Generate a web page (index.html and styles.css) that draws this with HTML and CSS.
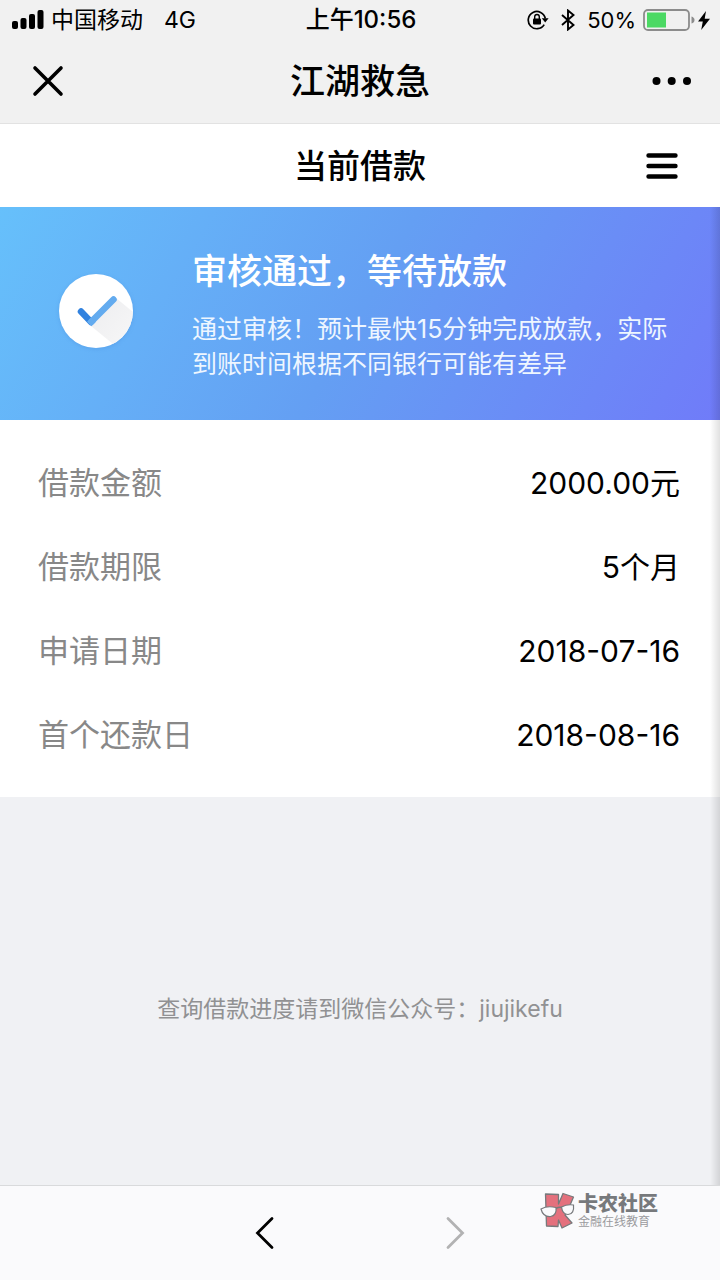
FILE: index.html
```html
<!DOCTYPE html>
<html lang="zh-CN">
<head>
<meta charset="utf-8">
<meta name="viewport" content="width=device-width, initial-scale=1">
<title>江湖救急</title>
<link rel="stylesheet" href="styles.css">
</head>
<body>
<div class="screen">
  <header class="app-header">
    <div class="status-bar">
      <div class="status-left">
        <svg width="32" height="20" viewBox="0 0 32 20" aria-hidden="true"><rect x="0" y="11" width="6" height="8" rx="2"/><rect x="8.500" y="8" width="6" height="11" rx="2"/><rect x="17" y="4" width="6" height="15" rx="2"/><rect x="25.500" y="0" width="6" height="19" rx="2"/></svg>
        <span class="carrier">中国移动</span>
        <span>4G</span>
      </div>
      <time class="clock">上午10:56</time>
      <div class="status-right">
        <svg width="22" height="20" viewBox="0 0 22 20" aria-hidden="true"><path d="M17.200 14.600A8.600 8.600 0 1 1 18.300 8.500" fill="none" stroke="#000" stroke-width="1.700"/><path d="M14.800 8.300h6.800l-3.400 4.200z"/><rect x="6" y="8.500" width="8" height="6" rx="1"/><path d="M7.700 9V6.800a2.300 2.300 0 0 1 4.600 0V9" fill="none" stroke="#000" stroke-width="1.400"/></svg>
        <svg class="bluetooth" width="14" height="22" viewBox="0 0 14 22" aria-hidden="true"><path d="M1 6l11.500 10L7 20.500v-19L12.500 6 1 16" fill="none" stroke="#000" stroke-width="1.900"/></svg>
        <span class="charge">50%</span>
        <svg width="52" height="22" viewBox="0 0 52 22" aria-hidden="true"><rect x="1" y="1" width="45" height="20" rx="4" fill="none" stroke="#8c8c8c" stroke-width="1.800"/><rect x="4" y="3.500" width="19" height="15" fill="#4cd964"/><path d="M48.500 7.500q3 1 3 3.500t-3 3.500z" fill="#8c8c8c"/></svg>
        <svg class="bolt" width="12" height="19" viewBox="0 0 12 19" aria-hidden="true"><path d="M8 0L0 10.500h4.800L3.200 19 12 7.800H6.700z"/></svg>
      </div>
    </div>
    <div class="title-bar">
      <button class="icon-button close" type="button" aria-label="关闭"><svg width="32" height="32" viewBox="0 0 32 32"><path d="M3 3l26 26M29 3L3 29" fill="none" stroke="#000" stroke-width="3.600" stroke-linecap="round"/></svg></button>
      <h1 class="app-title">江湖救急</h1>
      <button class="icon-button" type="button" aria-label="更多"><svg width="40" height="8" viewBox="0 0 40 8"><circle cx="4.500" cy="4" r="4"/><circle cx="19.700" cy="4" r="4"/><circle cx="35" cy="4" r="4"/></svg></button>
    </div>
  </header>

  <div class="page-bar">
    <h2 class="page-title">当前借款</h2>
    <button class="icon-button" type="button" aria-label="菜单"><svg width="32" height="26" viewBox="0 0 32 26"><path d="M2.500 2.500h27M2.500 13h27M2.500 23.500h27" stroke="#000" stroke-width="4.400" stroke-linecap="round"/></svg></button>
  </div>

  <main class="content">
    <section class="banner">
      <svg class="check" width="82" height="84" viewBox="0 0 82 84" aria-hidden="true">
        <defs>
          <clipPath id="disc"><circle cx="41" cy="41" r="37"/></clipPath>
          <linearGradient id="shade" x1="0" y1="0" x2="1" y2="1"><stop offset="0" stop-color="#ededef"/><stop offset="1" stop-color="#fafafa"/></linearGradient>
        </defs>
        <circle class="check-shadow" cx="41" cy="42" r="37"/>
        <circle cx="41" cy="41" r="37" fill="#fff"/>
        <path d="M61 28L90 52 80 92 36 56z" fill="url(#shade)" clip-path="url(#disc)"/>
        <path d="M26 41.500L36 52" stroke="#3182df" stroke-width="6.500" stroke-linecap="round"/>
        <path d="M36.500 51.500L58.500 29.500" stroke="#63abef" stroke-width="6.500" stroke-linecap="round"/>
        <path d="M32 51.800L36.500 47.300 41 51.800 36.500 56.300z" fill="#63abef"/>
      </svg>
      <div class="banner-text">
        <h3 class="banner-title">审核通过，等待放款</h3>
        <p class="banner-note">通过审核！预计最快15分钟完成放款，实际到账时间根据不同银行可能有差异</p>
      </div>
    </section>
    <dl class="details">
      <div class="detail"><dt>借款金额</dt><dd>2000.00元</dd></div>
      <div class="detail"><dt>借款期限</dt><dd>5个月</dd></div>
      <div class="detail"><dt>申请日期</dt><dd>2018-07-16</dd></div>
      <div class="detail"><dt>首个还款日</dt><dd>2018-08-16</dd></div>
    </dl>
    <p class="help">查询借款进度请到微信公众号：jiujikefu</p>
  </main>

  <nav class="toolbar">
    <button class="icon-button" type="button" aria-label="后退"><svg width="20" height="34" viewBox="0 0 20 34"><path d="M17 2.500L2.500 17 17 31.500" fill="none" stroke="#000" stroke-width="2.800" stroke-linecap="round"/></svg></button>
    <button class="icon-button" type="button" aria-label="前进" disabled><svg width="20" height="34" viewBox="0 0 20 34"><path d="M3 2.500L17.500 17 3 31.500" fill="none" stroke="#b2b2b3" stroke-width="2.800" stroke-linecap="round"/></svg></button>
    <div class="watermark">
      <svg width="36" height="38" viewBox="0 0 36 38" aria-hidden="true">
        <path d="M5.500 2L18.500 2.500 18.500 12 23 1.500 33.500 5 27.500 19 25 23 32 31 22 36 18.500 28 18 34.500 6.500 34z" fill="#e4707d" stroke="#77797c" stroke-width="1.300" stroke-linejoin="round"/>
        <path d="M16 16.500q3-2 6-1" fill="none" stroke="#77797c" stroke-width="1.500"/>
        <path d="M1 17q6-3.500 15-1.500 1 8-5.500 9Q3 25 1 17z" fill="#fafafc" stroke="#77797c" stroke-width="1.200"/>
        <path d="M21.500 15q5.500-3 12-2 1 9-5.500 9.500-5.500 0-6.500-7.500z" fill="#fafafc" stroke="#77797c" stroke-width="1.200"/>
      </svg>
      <div class="watermark-text">
        <strong>卡农社区</strong>
        <span>金融在线教育</span>
      </div>
    </div>
  </nav>
</div>
</body>
</html>
```
FILE: styles.css
```css
* {
  box-sizing: border-box;
}

body {
  margin: 0;
  font-family: Inter, "Noto Sans CJK SC", sans-serif;
  color: #000;
  background: #f0f1f4;
}

h1, h2, h3, p, dl, dd {
  margin: 0;
}

svg {
  display: block;
  flex: none;
}

.screen {
  display: flex;
  flex-direction: column;
  min-height: 100vh;
}

.icon-button {
  display: flex;
  align-items: center;
  padding: 0;
  border: 0;
  background: none;
}

.app-header {
  background: #f1f1f1;
  border-bottom: 1px solid #e2e2e2;
}

.status-bar {
  display: grid;
  grid-template-columns: 1fr auto 1fr;
  align-items: center;
  height: 40px;
  padding: 0 10px 0 12px;
  font-size: 23px;
  line-height: 40px;
}

.status-left,
.status-right {
  display: flex;
  align-items: center;
  gap: 7px;
}

.status-right {
  justify-content: flex-end;
}

.carrier {
  margin-right: 14px;
}

.bluetooth {
  margin: 0 5px;
}

.charge {
  font-size: 22px;
}

.bolt {
  margin-left: -4px;
}

.clock {
  font-size: 24px;
  font-weight: 500;
}

.title-bar,
.page-bar {
  display: grid;
  grid-template-columns: 1fr auto 1fr;
  align-items: center;
}

.title-bar {
  height: 83px;
  padding: 0 28px 2px;
}

.title-bar .icon-button:last-child,
.page-bar .icon-button {
  justify-self: end;
}

.close {
  margin-left: 4px;
}

.app-title {
  font-size: 35px;
  line-height: 48px;
  font-weight: 500;
}

.page-bar {
  height: 83px;
  padding: 0 42px;
  background: #fff;
}

.page-title {
  grid-column: 2;
  font-size: 33px;
  line-height: 44px;
  font-weight: 500;
}

.content {
  position: relative;
  flex: 1;
}

.content::after {
  content: "";
  position: absolute;
  top: 0;
  right: 0;
  bottom: 0;
  width: 10px;
  background: linear-gradient(to right, rgba(0, 0, 0, 0), rgba(0, 0, 0, 0.12));
}

.banner {
  display: flex;
  align-items: center;
  gap: 55px;
  min-height: 213px;
  padding: 38px 32px 38px 55px;
  color: #fff;
  background: linear-gradient(120deg, #66c0fb 0%, #649ff3 50%, #707bf9 100%);
}

.check {
  margin-bottom: 3px;
}

.check-shadow {
  fill: #3f7fd0;
  opacity: 0.3;
  filter: blur(2px);
}

.banner-title {
  margin-bottom: 16px;
  font-size: 35px;
  line-height: 50px;
  font-weight: 500;
}

.banner-note {
  color: #eef6ff;
  font-size: 25px;
  line-height: 35px;
}

.details {
  padding: 21px 40px 20px 38px;
  background: #fff;
}

.detail {
  display: flex;
  align-items: center;
  justify-content: space-between;
  min-height: 84px;
  font-size: 31px;
  line-height: 44px;
}

.detail dt {
  color: #888;
}

.detail dd {
  font-size: 30px;
}

.help {
  padding: 194px 20px 40px;
  color: #919193;
  font-size: 23px;
  line-height: 36px;
  text-align: center;
}

.toolbar {
  position: relative;
  display: flex;
  align-items: center;
  justify-content: center;
  gap: 170px;
  height: 95px;
  border-top: 1px solid #d9dadc;
  background: #fafafc;
}

.watermark {
  position: absolute;
  top: 5px;
  right: 62px;
  display: flex;
  align-items: center;
  gap: 2px;
  color: #77797c;
}

.watermark-text {
  display: flex;
  flex-direction: column;
  padding-top: 3px;
}

.watermark-text strong {
  font-size: 20px;
  line-height: 20px;
  font-weight: 900;
}

.watermark-text span {
  color: #9a9b9e;
  font-size: 12px;
  line-height: 16px;
}
```
